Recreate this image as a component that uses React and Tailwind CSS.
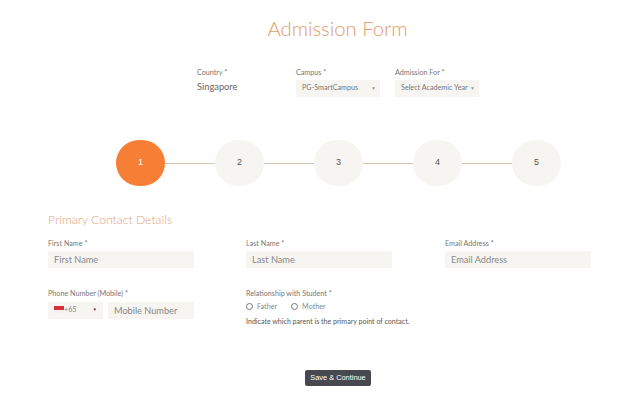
import React from 'react';

const lato = 'font-["Lato","Noto_Sans",sans-serif]';
const steps = [1, 2, 3, 4, 5];

function Label({ children }) {
  return <label className="block h-[13px] text-[7.2px] leading-[11px] text-[#777]">{children}</label>;
}

function Select({ value }) {
  return (
    <div className="flex h-[17px] w-[84px] items-center justify-between whitespace-nowrap bg-[#f7f5f1] pl-[6px] pr-[4px] text-[7.2px] text-[#777]">
      <span>{value}</span>
      <span className="text-[5px] text-[#999]">▼</span>
    </div>
  );
}

function TextInput({ placeholder, className }) {
  return (
    <div className={`flex h-[17px] items-center bg-[#f7f5f1] px-[6px] text-[9.2px] text-[#888] ${className}`}>
      {placeholder}
    </div>
  );
}

function Radio({ label }) {
  return (
    <div className="flex items-center gap-[4px]">
      <span className="h-[7px] w-[7px] rounded-full border border-[#777]" />
      <span className="text-[7.2px] text-[#888]">{label}</span>
    </div>
  );
}

export default function App() {
  return (
    <div className={`${lato} h-[405px] w-[640px] overflow-hidden bg-white`}>
      <h1 className="ml-[35px] pt-[14px] text-center text-[20.3px] font-light leading-[28px] text-[#e29c6c]">
        Admission Form
      </h1>

      {/* Country / campus */}
      <div className="mt-[25px] flex pl-[197px]">
        <div className="w-[99px]">
          <Label>Country *</Label>
          <p className="text-[9.3px] leading-[14px] text-[#666]">Singapore</p>
        </div>
        <div className="w-[99px]">
          <Label>Campus *</Label>
          <Select value="PG-SmartCampus" />
        </div>
        <div className="w-[84px]">
          <Label>Admission For *</Label>
          <Select value="Select Academic Year" />
        </div>
      </div>

      {/* Steps */}
      <div className="mt-[43px] flex items-center pl-[116px]">
        {steps.map((n) => (
          <React.Fragment key={n}>
            <div
              className={`flex h-[46px] w-[49px] items-center justify-center rounded-full font-["Liberation_Sans",sans-serif] text-[9px] ${
                n === 1 ? 'bg-[#f77f35] text-white' : 'bg-[#f7f5f1] text-[#555]'
              }`}
            >
              {n}
            </div>
            {n < 5 && <div className="h-px w-[50px] bg-[#d6c6ac]" />}
          </React.Fragment>
        ))}
      </div>

      <div className="pl-[48px]">
        <h2 className="mt-[25px] text-[12.2px] font-light leading-[18px] text-[#dfa47a]">
          Primary Contact Details
        </h2>

        <div className="mt-[9px] grid grid-cols-[198px_199px_146px]">
          <div>
            <Label>First Name *</Label>
            <TextInput placeholder="First Name" className="w-[146px]" />
          </div>
          <div>
            <Label>Last Name *</Label>
            <TextInput placeholder="Last Name" className="w-[146px]" />
          </div>
          <div>
            <Label>Email Address *</Label>
            <TextInput placeholder="Email Address" className="w-[146px]" />
          </div>
        </div>

        <div className="mt-[20px] grid grid-cols-[198px_300px]">
          <div>
            <Label>Phone Number (Mobile) *</Label>
            <div className="mt-px flex gap-[5px]">
              <div className="flex h-[17px] w-[55px] items-center bg-[#f7f5f1] pl-[6px] text-[7.2px] text-[#888]">
                <svg width="10" height="7" viewBox="0 0 10 7" className="-mt-[2px] shrink-0">
                  <rect width="10" height="4" fill="#d8303a" />
                  <rect y="4" width="10" height="3" fill="#f4f0ec" />
                </svg>
                <span>+65</span>
                <span className="ml-[16px] text-[4.5px] text-[#444]">▼</span>
              </div>
              <TextInput placeholder="Mobile Number" className="w-[86px]" />
            </div>
          </div>
          <div>
            <Label>Relationship with Student *</Label>
            <div className="flex h-[12px] items-center gap-[14px]">
              <Radio label="Father" />
              <Radio label="Mother" />
            </div>
            <p className="mt-[3px] text-[7.05px] font-medium leading-[12px] text-[#666]">
              Indicate which parent is the primary point of contact.
            </p>
          </div>
        </div>
      </div>

      <div className="mt-[42px] flex justify-center pl-[36px]">
        <button className='h-[16px] w-[66px] rounded-[2px] bg-[#48484f] font-["Liberation_Sans",sans-serif] text-[7.4px] text-white'>
          Save &amp; Continue
        </button>
      </div>
    </div>
  );
}
